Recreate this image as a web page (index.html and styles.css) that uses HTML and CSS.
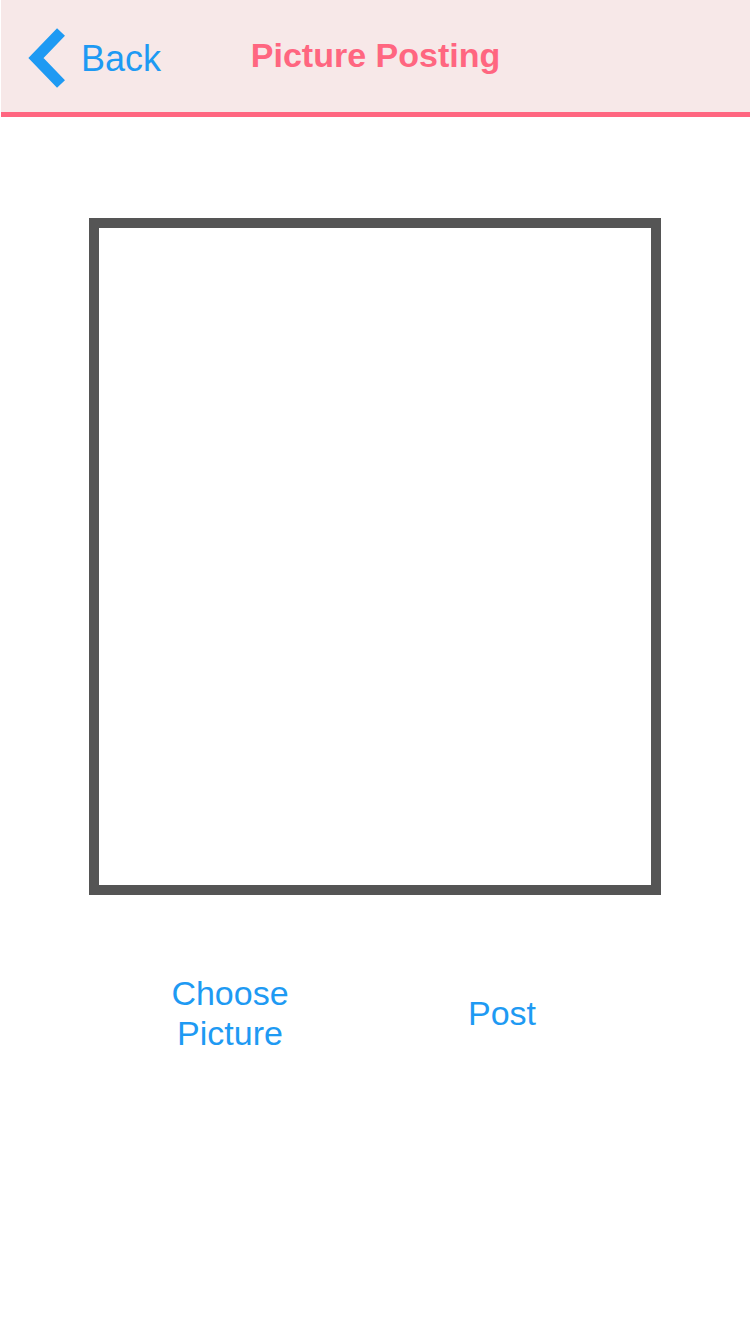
FILE: index.html
```html
<!DOCTYPE html>
<html lang="en">
<head>
  <meta charset="UTF-8">
  <title>Picture Posting</title>
  <link rel="stylesheet" href="styles.css">
</head>
<body>
  <div class="header">
    <a class="back" href="#">
      <svg class="back-icon" width="50" height="72" viewBox="0 0 50 72">
        <polyline points="41,12 16,38 41,64" fill="none" stroke="#1e9af3" stroke-width="11" stroke-linejoin="miter"/>
      </svg>
      <span>Back</span>
    </a>
    <h1 class="title">Picture Posting</h1>
    <div></div>
  </div>

  <!-- vùng xem trước ảnh -->
  <div class="preview"></div>

  <div class="actions">
    <button class="action">Choose Picture</button>
    <button class="action">Post</button>
  </div>
</body>
</html>
```

FILE: styles.css
```css
body {
  margin: 0;
  padding: 0;
  background: #fff;
  font-family: "Liberation Sans", Arial, sans-serif;
}
.header {
  display: grid;
  grid-template-columns: 1fr auto 1fr;
  height: 112px;
  margin-left: 1px;
  background: #f7e8e8;
  border-bottom: 5px solid #ff6680;
}
.back {
  display: flex;
  align-items: flex-start;
  padding: 20px 0 0 19px;
  color: #1e9af3;
  text-decoration: none;
  font-size: 36px;
}
.back span {
  margin: 18px 0 0 11px;
}
.title {
  margin: 0;
  padding-top: 35px;
  color: #ff6680;
  font-size: 34px;
  font-weight: bold;
  line-height: 40px;
}
.preview {
  width: 552px;
  height: 657px;
  margin: 101px auto 0;
  border: 10px solid #555;
}
.actions {
  display: flex;
  align-items: center;
  gap: 122px;
  padding-left: 155px;
  margin-top: 78px;
}
.action {
  width: 150px;
  padding: 0;
  border: none;
  background: none;
  color: #1e9af3;
  font-family: "Liberation Sans", Arial, sans-serif;
  font-size: 34px;
  line-height: 40px;
  cursor: pointer;
}
```
